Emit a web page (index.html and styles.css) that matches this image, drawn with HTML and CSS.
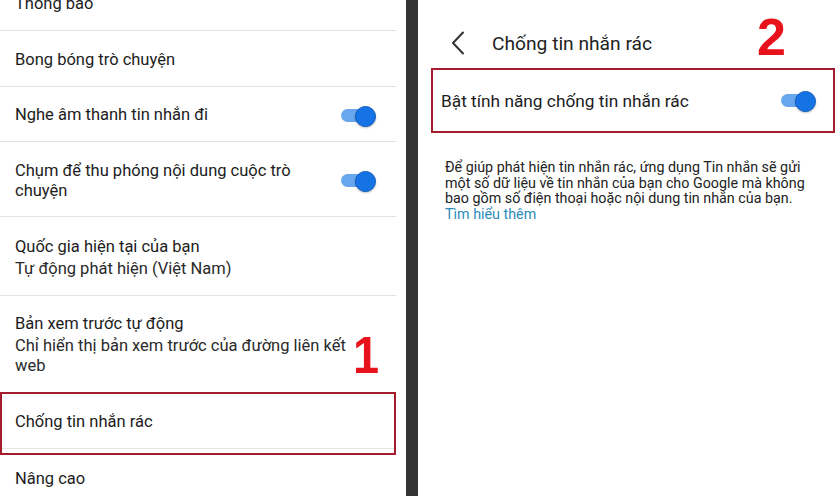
FILE: index.html
```html
<!DOCTYPE html>
<html lang="vi">
<head>
<meta charset="utf-8">
<title>Chống tin nhắn rác</title>
<link rel="stylesheet" href="styles.css">
</head>
<body>
<div class="screen">
  <section class="panel panel-left">
    <div class="list">
      <div class="row"><div class="text"><div class="title">Thông báo</div></div></div>
      <div class="row"><div class="text"><div class="title">Bong bóng trò chuyện</div></div></div>
      <div class="row"><div class="text"><div class="title">Nghe âm thanh tin nhắn đi</div></div><span class="toggle"></span></div>
      <div class="row row-tall"><div class="text"><div class="title title-wrap">Chụm để thu phóng nội dung cuộc trò<br>chuyện</div></div><span class="toggle"></span></div>
      <div class="row row-sub"><div class="text"><div class="title">Quốc gia hiện tại của bạn</div><div class="subtitle">Tự động phát hiện (Việt Nam)</div></div></div>
      <div class="row row-sub row-preview"><div class="text"><div class="title">Bản xem trước tự động</div><div class="subtitle">Chỉ hiển thị bản xem trước của đường liên kết<br>web</div></div></div>
      <div class="highlight highlight-left">
        <div class="row row-in"><div class="text"><div class="title">Chống tin nhắn rác</div></div></div>
      </div>
      <div class="row row-last"><div class="text"><div class="title">Nâng cao</div></div></div>
    </div>
    <span class="step step-1">1</span>
  </section>
  <div class="divider"></div>
  <section class="panel panel-right">
    <header class="appbar">
      <svg class="back" width="14" height="24" viewBox="0 0 14 24" aria-hidden="true"><polyline points="12,1.5 2,12 12,22.5" fill="none" stroke="#333" stroke-width="2" stroke-linecap="round" stroke-linejoin="round"/></svg>
      <h1 class="appbar-title">Chống tin nhắn rác</h1>
    </header>
    <div class="highlight highlight-right">
      <div class="switch-row"><span class="switch-label">Bật tính năng chống tin nhắn rác</span><span class="toggle"></span></div>
    </div>
    <p class="info">Để giúp phát hiện tin nhắn rác, ứng dụng Tin nhắn sẽ gửi<br>một số dữ liệu về tin nhắn của bạn cho Google mà không<br>bao gồm số điện thoại hoặc nội dung tin nhắn của bạn.<br><a class="link" href="#">Tìm hiểu thêm</a></p>
    <span class="step step-2">2</span>
  </section>
</div>
</body>
</html>
```

FILE: styles.css
```css
* { box-sizing: border-box; }
html, body { margin: 0; padding: 0; }
body {
  width: 836px;
  height: 496px;
  overflow: hidden;
  background: #fff;
  font-family: Roboto, "Noto Sans", "Liberation Sans", sans-serif;
  color: #212121;
}
.screen {
  display: flex;
  width: 836px;
  height: 496px;
}
.panel {
  position: relative;
  background: #fff;
  overflow: hidden;
  height: 496px;
}
.panel-left { width: 406px; }
.divider { width: 12px; background: #333333; }
.panel-right { width: 418px; }

.list {
  width: 396px;
  margin-top: -25px;
}
.row {
  display: flex;
  align-items: center;
  min-height: 56px;
  padding: 2px 20px 0 15px;
  border-bottom: 1px solid #e2e2e2;
}
.row:nth-child(3) { min-height: 55px; }
.text { flex: 1; }
.title {
  font-size: 16.5px;
  line-height: 22px;
  color: #1c1c1c;
}
.title-wrap { line-height: 20px; }
.subtitle {
  font-size: 16.5px;
  line-height: 20px;
  margin-top: 1px;
  color: #2a2a2a;
}
.row-tall { min-height: 75px; padding-top: 3px; }
.row-sub { min-height: 79px; padding-top: 2px; }
.row-preview { min-height: 96px; border-bottom: none; padding-top: 0; }

.highlight {
  border: 2px solid #a51c2e;
}
.highlight-left {
  width: 396px;
  padding-bottom: 4px;
}
.row-in {
  min-height: 55px;
  padding-left: 13px;
  border-bottom: 1px solid #e3e3e3;
}
.row-last { border-bottom: none; min-height: 45px; }

.toggle {
  position: relative;
  display: block;
  width: 35px;
  height: 19px;
  flex: none;
}
.toggle::before {
  content: "";
  position: absolute;
  left: 0;
  top: 3px;
  width: 31px;
  height: 13px;
  border-radius: 7px;
  background: #68a6ee;
}
.toggle::after {
  content: "";
  position: absolute;
  right: 0;
  top: 0;
  width: 19px;
  height: 19px;
  border-radius: 50%;
  background: #1673e6;
  border: 1px solid #0c5bbf;
  box-shadow: 0 1px 2px rgba(0, 0, 0, 0.25);
}

.step {
  position: absolute;
  font-family: "Liberation Sans", Arial, sans-serif;
  font-weight: 700;
  font-size: 52px;
  line-height: 52px;
  color: #e8121c;
}
.step-1 { left: 353px; top: 329px; transform: scaleX(0.9); transform-origin: left top; }
.step-2 { left: 339px; top: 11px; }

.appbar {
  display: flex;
  align-items: center;
  height: 56px;
  margin-top: 15px;
  padding-left: 33px;
}
.back { display: block; margin-right: 27px; }
.appbar-title {
  margin: 0;
  font-size: 19.2px;
  font-weight: 400;
  color: #222;
}
.highlight-right {
  margin: -3px 1px 0 13px;
  height: 65px;
  display: flex;
  align-items: center;
}
.switch-row {
  flex: 1;
  display: flex;
  align-items: center;
  justify-content: space-between;
  padding: 0 17px 0 8px;
}
.switch-label {
  font-size: 17.3px;
  color: #1c1c1c;
}
.info {
  margin: 27px 0 0 27px;
  font-size: 14.3px;
  line-height: 15.7px;
  color: #222;
}
.link {
  color: #2b8bb8;
  text-decoration: none;
}
```
